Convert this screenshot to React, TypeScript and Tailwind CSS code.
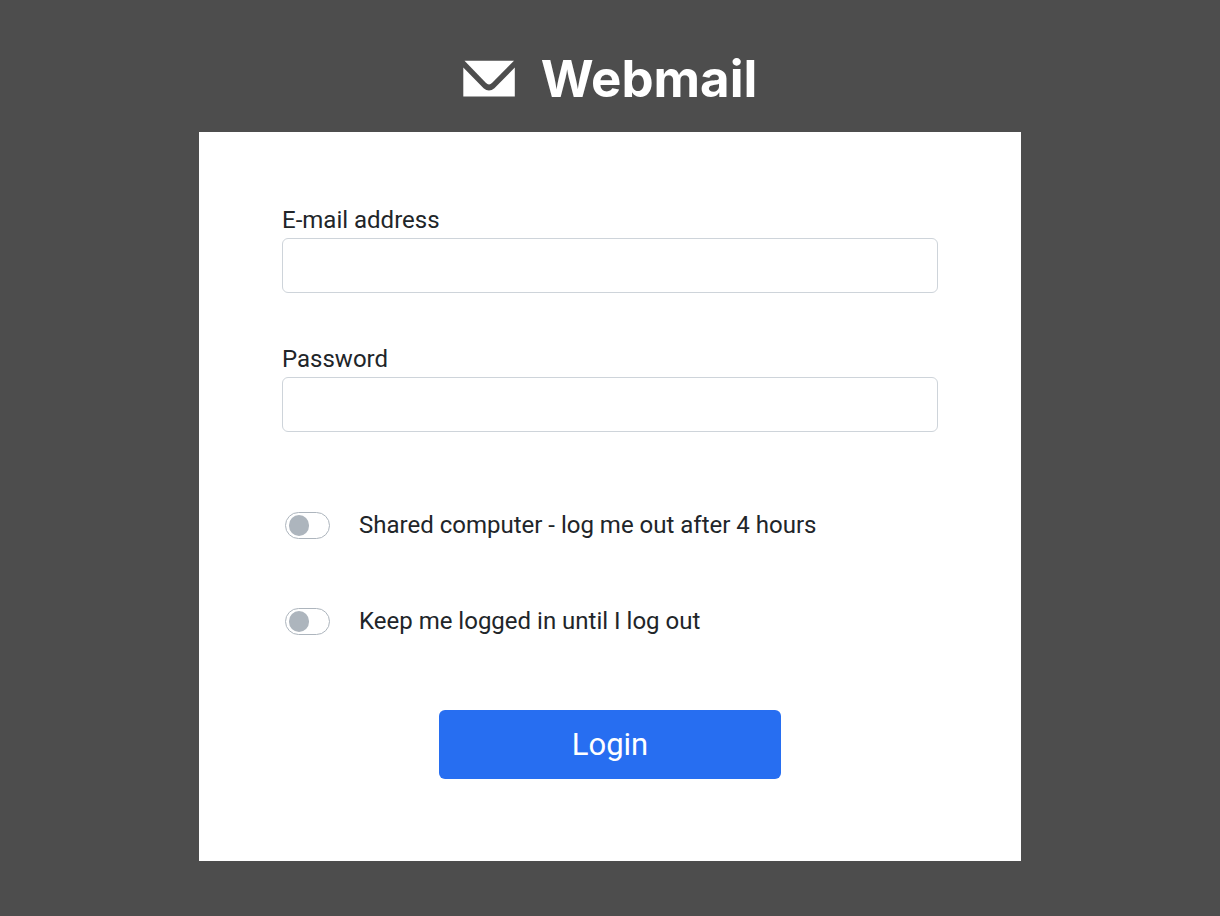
import React, { useState } from 'react';

type Session = 'none' | 'shared' | 'keep';

interface FieldProps {
  id: string;
  label: string;
  type: string;
  value: string;
  onChange: (value: string) => void;
}

const Field: React.FC<FieldProps> = ({ id, label, type, value, onChange }) => (
  <div>
    <label htmlFor={id} className="block">{label}</label>
    <input
      id={id}
      type={type}
      value={value}
      onChange={e => onChange(e.target.value)}
      className="block w-full h-[55px] px-4 bg-white border border-[#ced4da] rounded-md outline-none focus:border-[#276ef1]"
    />
  </div>
);

interface ToggleProps {
  id: string;
  label: string;
  checked: boolean;
  onChange: () => void;
}

const Toggle: React.FC<ToggleProps> = ({ id, label, checked, onChange }) => (
  <div className="flex items-center gap-[29px] px-[3px]">
    <input
      id={id}
      type="checkbox"
      checked={checked}
      onChange={onChange}
      className="flex items-center shrink-0 appearance-none w-[45px] h-[27px] px-[3px] rounded-full border border-[#adb5bd] bg-white cursor-pointer before:block before:w-5 before:h-[21px] before:rounded-full before:bg-[#adb5bd] checked:justify-end checked:bg-[#276ef1] checked:before:bg-white"
    />
    <label htmlFor={id} className="cursor-pointer">{label}</label>
  </div>
);

export default function App() {
  const [email, setEmail] = useState('');
  const [password, setPassword] = useState('');
  const [session, setSession] = useState<Session>('none');

  const toggleSession = (next: Session) => setSession(session === next ? 'none' : next);

  return (
    <div className="min-h-screen bg-[#4d4d4d] font-['Roboto',sans-serif] text-2xl leading-9 text-[#212529]">

      {/* LOGO */}
      <header className="flex items-center justify-center gap-[26px] pt-12 pb-[22px] text-white">
        <svg viewBox="0 0 52 38" className="w-[52px] h-[38px]" fill="currentColor" aria-hidden="true">
          <path d="M1.5 0.7H51L29.2 22.8Q26 26 22.8 22.8Z" />
          <path d="M0.3 7.6L20.6 28.2Q26 32.6 31.4 28.2L51.8 7.6V36.5H0.3Z" />
        </svg>
        <h1 className="font-['Inter',sans-serif] font-bold text-[51px] leading-[62px]">Webmail</h1>
      </header>

      {/* LOGIN FORM */}
      <main className="w-full max-w-[822px] mx-auto bg-white px-[83px] pt-[70px] pb-[82px]">
        <form onSubmit={e => e.preventDefault()}>
          <div className="flex flex-col gap-12">
            <Field id="email" label="E-mail address" type="text" value={email} onChange={setEmail} />
            <Field id="password" label="Password" type="password" value={password} onChange={setPassword} />
          </div>

          <div className="flex flex-col gap-[60px] mt-[75px]">
            <Toggle
              id="shared"
              label="Shared computer - log me out after 4 hours"
              checked={session === 'shared'}
              onChange={() => toggleSession('shared')}
            />
            <Toggle
              id="keep"
              label="Keep me logged in until I log out"
              checked={session === 'keep'}
              onChange={() => toggleSession('keep')}
            />
          </div>

          <button
            type="submit"
            className="block w-full max-w-[342px] h-[69px] mx-auto mt-[71px] rounded-md bg-[#276ef1] hover:bg-[#1f5fd6] text-white text-[31px] cursor-pointer"
          >
            Login
          </button>
        </form>
      </main>
    </div>
  );
}
